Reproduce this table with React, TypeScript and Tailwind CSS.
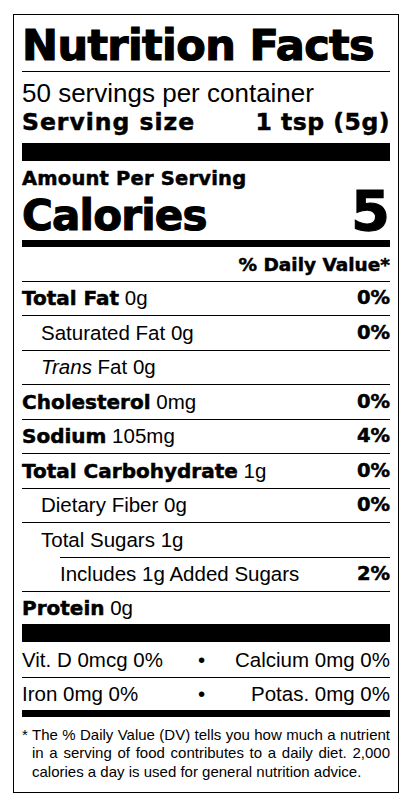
import React from "react";

const H = "font-['DejaVu_Sans',sans-serif] font-bold [-webkit-text-stroke:0.5px_black]";

function Row({
  children,
  right,
  indent = 0,
  lineIndent = false,
  h = "h-[34.5px]",
}: {
  children: React.ReactNode;
  right?: React.ReactNode;
  indent?: number;
  lineIndent?: boolean;
  h?: string;
}) {
  return (
    <div className={lineIndent ? "pl-[38px]" : ""}>
      <div className={"flex items-center justify-between border-t border-black text-[20.5px] leading-[22px] " + h}>
        <div className={indent === 1 ? "pl-[19px]" : ""}>{children}</div>
        {right !== undefined && <div className={H + " text-[19.5px]"}>{right}</div>}
      </div>
    </div>
  );
}

export default function App() {
  return (
    <div className="min-h-screen bg-white pt-[14px] font-['Liberation_Sans',Arial,sans-serif] text-black">
      <div className="mx-auto w-[386px] border border-black px-[8px] pt-[7px] pb-[11px]">
        <h1 className="font-['DejaVu_Sans',sans-serif] text-[43px] leading-[47px] font-bold tracking-[-0.6px] [-webkit-text-stroke:1.2px_black]">
          Nutrition Facts
        </h1>
        <div className="mt-[2px] h-px bg-black" />
        <p className="mt-[7px] text-[26px] leading-[29px]">50 servings per container</p>
        <div className={"mt-[2px] flex justify-between text-[23.5px] leading-[25px] " + H}>
          <span className="tracking-[1px]">Serving size</span>
          <span className="tracking-[0.5px]">1 tsp (5g)</span>
        </div>
        <div className="mt-[8px] h-[18px] bg-black" />

        <div className={"mt-[8px] text-[19.5px] leading-[20px] tracking-[0.2px] " + H}>Amount Per Serving</div>
        <div className="mt-[2px] flex items-baseline justify-between">
          <span className="font-['DejaVu_Sans',sans-serif] text-[42px] leading-[44px] tracking-[-0.8px] font-bold [-webkit-text-stroke:1.1px_black]">
            Calories
          </span>
          <span className="font-['DejaVu_Sans',sans-serif] text-[56px] leading-[40px] font-bold [-webkit-text-stroke:1.1px_black]">
            5
          </span>
        </div>
        <div className="mt-[1.5px] h-[7px] bg-black" />

        <div className={"pt-[8px] pb-[7px] text-right text-[18.5px] leading-[19px] " + H}>% Daily Value*</div>

        <Row right="0%">
          <span className={H + " text-[20px]"}>Total Fat</span> 0g
        </Row>
        <Row right="0%" indent={1}>
          Saturated Fat 0g
        </Row>
        <Row indent={1}>
          <i>Trans</i> Fat 0g
        </Row>
        <Row right="0%">
          <span className={H + " text-[20px]"}>Cholesterol</span> 0mg
        </Row>
        <Row right="4%">
          <span className={H + " text-[20px]"}>Sodium</span> 105mg
        </Row>
        <Row right="0%">
          <span className={H + " text-[20px]"}>Total Carbohydrate</span> 1g
        </Row>
        <Row right="0%" indent={1}>
          Dietary Fiber 0g
        </Row>
        <Row indent={1}>Total Sugars 1g</Row>
        <Row right="2%" lineIndent>
          Includes 1g Added Sugars
        </Row>
        <Row h="h-[33px]">
          <span className={H + " text-[20px]"}>Protein</span> 0g
        </Row>
        <div className="h-[18px] bg-black" />

        <div className="grid h-[35px] grid-cols-[1fr_auto_1fr] items-center text-[20.5px] leading-[22px]">
          <span>Vit. D 0mcg 0%</span>
          <span className="pr-[9px]">•</span>
          <span className="text-right">Calcium 0mg 0%</span>
        </div>
        <div className="grid h-[33px] grid-cols-[1fr_auto_1fr] items-center border-t border-black text-[20.5px] leading-[22px]">
          <span>Iron 0mg 0%</span>
          <span className="pr-[9px]">•</span>
          <span className="text-right">Potas. 0mg 0%</span>
        </div>
        <div className="h-[7px] bg-black" />

        <div className="flex pt-[8.5px] text-[15px] leading-[18.5px]">
          <span className="w-[10px] shrink-0">*</span>
          <p className="text-justify">
            The % Daily Value (DV) tells you how much a nutrient in a serving of food contributes to a daily
            diet. 2,000 calories a day is used for general nutrition advice.
          </p>
        </div>
      </div>
    </div>
  );
}
